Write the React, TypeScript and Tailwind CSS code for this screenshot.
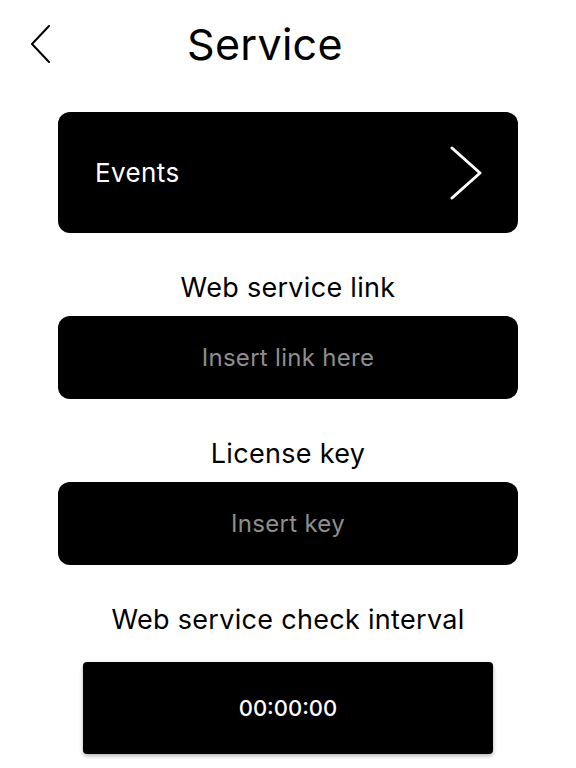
import { ReactNode } from "react";

function Label({ children, mb = "mb-[10px]" }: { children: ReactNode; mb?: string }) {
  return (
    <div
      className={`mt-[37px] ${mb} h-[36px] flex items-center justify-center text-[27px] tracking-[0.3px] leading-[36px] text-black`}
    >
      {children}
    </div>
  );
}

function InputBox({ placeholder }: { placeholder: string }) {
  return (
    <div className="mx-[58px] h-[83px] rounded-[12px] bg-black flex items-center justify-center">
      <span className="text-[24px] tracking-[0.3px] text-[#8e8e8e]">{placeholder}</span>
    </div>
  );
}

export default function App() {
  return (
    <div
      className="w-[576px] h-[768px] bg-white flex flex-col overflow-hidden"
      style={{ fontFamily: "Inter, 'Noto Sans', sans-serif" }}
    >
      {/* Header */}
      <div className="h-[88px] flex items-center pl-[30px]">
        <svg width="22" height="38" viewBox="0 0 22 38" fill="none">
          <path d="M19 1 L2 19 L19 37" stroke="#000" strokeWidth="2" strokeLinecap="round" strokeLinejoin="round" />
        </svg>
        <h1 className="ml-[135px] text-[43px] font-normal tracking-[0.3px] leading-none text-black">Service</h1>
      </div>

      {/* Events */}
      <div className="mt-[24px] mx-[58px] h-[121px] rounded-[12px] bg-black flex items-center justify-between pl-[37px] pr-[36px]">
        <span className="text-[26px] tracking-[0.4px] text-white">Events</span>
        <svg width="32" height="54" viewBox="0 0 32 54" fill="none">
          <path d="M2 2 L30 27 L2 52" stroke="#fff" strokeWidth="3" strokeLinecap="round" strokeLinejoin="round" />
        </svg>
      </div>

      <Label>Web service link</Label>
      <InputBox placeholder="Insert link here" />

      <Label>License key</Label>
      <InputBox placeholder="Insert key" />

      <Label mb="mb-[24px]">Web service check interval</Label>
      <div className="mx-[83px] h-[92px] rounded-[4px] bg-black shadow-[0_2px_4px_rgba(0,0,0,0.3)] flex items-center justify-center">
        <span className="text-[22px] font-medium text-white">00:00:00</span>
      </div>
    </div>
  );
}
